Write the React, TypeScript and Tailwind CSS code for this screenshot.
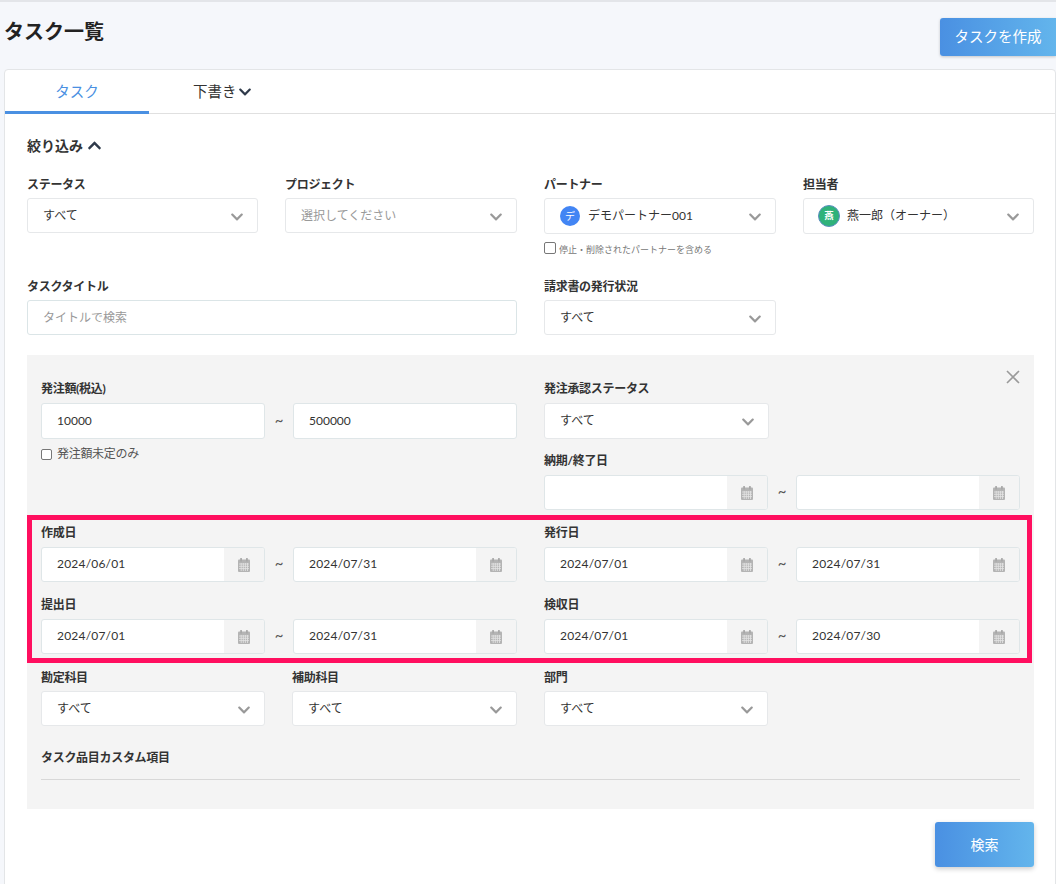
import { ReactNode } from "react";
import { FaChevronDown, FaChevronUp } from "react-icons/fa";

const Label = ({ children, gap = "mb-1" }: { children: ReactNode; gap?: string }) => (
  <div className={`h-5 leading-[22px] text-[12px] tracking-[-0.3px] font-bold text-[#333] ${gap}`}>{children}</div>
);

const Select = ({
  value,
  placeholder,
  icon,
  className = "h-[35px]",
}: {
  value?: string;
  placeholder?: string;
  icon?: ReactNode;
  className?: string;
}) => (
  <div
    className={`flex items-center bg-white border border-[#e6e8ea] rounded-[3px] pl-[15px] pr-[13px] ${className}`}
  >
    {icon}
    <span className={`flex-1 text-[12px] ${placeholder ? "text-[#999]" : "text-[#333]"}`}>
      {value ?? placeholder}
    </span>
    <FaChevronDown className="w-[14px] h-[14px] text-[#999] mt-[2px]" />
  </div>
);

const TextInput = ({ value, placeholder }: { value?: string; placeholder?: string }) => (
  <div className="flex items-center h-[36px] bg-white border border-[#dfe6e8] rounded-[3px] pl-[15px]">
    <span className={`text-[12px] ${placeholder ? "text-[#999]" : "text-[#333]"}`}>{value ?? placeholder}</span>
  </div>
);

const CalendarIcon = () => (
  <svg width="12" height="14" viewBox="0 0 12 14">
    <rect x="0" y="1.5" width="12" height="12.5" rx="1" fill="#b4b4b4" />
    <rect x="2.2" y="0" width="1.8" height="3.5" rx="0.6" fill="#a8a8a8" />
    <rect x="8" y="0" width="1.8" height="3.5" rx="0.6" fill="#a8a8a8" />
    <path
      d="M1 6h10M1 8.3h10M1 10.6h10M3.2 5v8M5.3 5v8M7.4 5v8M9.5 5v8"
      stroke="#e6e6e6"
      strokeWidth="0.8"
      fill="none"
    />
  </svg>
);

const DateInput = ({ value }: { value?: string }) => (
  <div className="flex h-[35px] bg-white border border-[#dfe6e8] rounded-[3px] overflow-hidden">
    <div className="flex-1 flex items-center pl-[15px] pb-[1px] text-[12px] tracking-[0.2px] text-[#333]">{value}</div>
    <div className="w-[40px] flex items-center justify-center bg-[#f4f4f4]">
      <CalendarIcon />
    </div>
  </div>
);

const Range = ({ children }: { children: ReactNode }) => (
  <div className="grid grid-cols-[224px_28px_224px] items-center">{children}</div>
);

const Tilde = () => <div className="text-center text-[15px] leading-5 text-[#555] pb-[3px]">~</div>;

const DateRange = ({ from, to }: { from?: string; to?: string }) => (
  <Range>
    <DateInput value={from} />
    <Tilde />
    <DateInput value={to} />
  </Range>
);

const Avatar = ({ text, className }: { text: string; className: string }) => (
  <span className={`flex items-center justify-center rounded-full text-white ${className}`}>{text}</span>
);

const Check = ({ className = "" }: { className?: string }) => (
  <span className={`block bg-white border border-[#777] rounded-[2px] ${className}`} />
);

export default function App() {
  return (
    <div
      className="h-[884px] overflow-hidden bg-[#f5f7fb] border-t-2 border-[#e3e5e9] pl-1 text-[#333]"
      style={{ fontFamily: '"Lato", "Noto Sans CJK JP", sans-serif' }}
    >
      {/* Header */}
      <div className="flex justify-between h-[67px]">
        <h1 className="text-[20px] font-bold leading-[28px] mt-[15px] text-[#222]">タスク一覧</h1>
        <button className="w-[116px] h-[38px] mt-4 rounded-l-[3px] bg-gradient-to-r from-[#4a90e2] to-[#63b5ec] text-white text-[14.5px] shadow-[0_1px_3px_rgba(0,0,0,0.2)]">
          タスクを作成
        </button>
      </div>

      <div className="bg-white border border-[#e3e5e7] rounded-t-[4px] h-[900px]">
        {/* Tabs */}
        <div className="flex h-[44px] border-b border-[#e0e0e0]">
          <div className="w-[144px] h-[44px] flex items-center justify-center border-b-[3px] border-[#4a90e2] text-[14.5px] text-[#4a90e2] pt-[3px]">
            タスク
          </div>
          <div className="flex items-center pl-[44px] pt-[1px] text-[14.5px] text-[#333]">
            下書き
            <FaChevronDown className="w-[14px] h-[14px] ml-[1px] text-[#2f3a4a]" />
          </div>
        </div>

        <div className="pl-[22px] pr-[21px] pt-[21px]">
          <div className="flex items-center h-5 mb-[19px] text-[14px] font-bold text-[#333]">
            絞り込み
            <FaChevronUp className="w-[15px] h-[15px] ml-[4px] text-[#2f3a4a]" />
          </div>

          {/* Main filters */}
          <div className="grid grid-cols-[231px_232px_232px_231px] gap-x-[27px] h-[102px]">
            <div>
              <Label>ステータス</Label>
              <Select value="すべて" />
            </div>
            <div>
              <Label>プロジェクト</Label>
              <Select placeholder="選択してください" />
            </div>
            <div>
              <Label>パートナー</Label>
              <Select
                className="h-[36px]"
                value="デモパートナー001"
                icon={<Avatar text="デ" className="w-5 h-5 mr-2 bg-[#4285f4] text-[10px]" />}
              />
              <div className="flex items-start mt-2">
                <Check className="w-[12px] h-[12px] mr-[3px]" />
                <span className="text-[9px] leading-[16px] text-[#777]">停止・削除されたパートナーを含める</span>
              </div>
            </div>
            <div>
              <Label>担当者</Label>
              <Select
                className="h-[36px]"
                value="燕一郎（オーナー）"
                icon={
                  <Avatar
                    text="燕"
                    className="w-[22px] h-[22px] -ml-[1px] mr-[7px] bg-[#2fb27a] border border-[#5b8fc0] text-[9px] font-bold"
                  />
                }
              />
            </div>
          </div>

          <div className="grid grid-cols-[490px_232px] gap-x-[27px]">
            <div>
              <Label>タスクタイトル</Label>
              <div className="[&>div]:h-[35px] [&>div]:border-[#dbe5e7]">
                <TextInput placeholder="タイトルで検索" />
              </div>
            </div>
            <div>
              <Label>請求書の発行状況</Label>
              <Select value="すべて" />
            </div>
          </div>

          {/* Detail panel */}
          <div className="relative mt-5 w-[1007px] h-[454px] bg-[#f4f4f4] pl-[14px] pt-[23px]">
            <button className="absolute right-[14px] top-[15px] text-[#9a9a9a]">
              <svg width="14" height="14" viewBox="0 0 14 14" fill="none" stroke="currentColor" strokeWidth="1.6">
                <path d="M1 1l12 12M13 1L1 13" />
              </svg>
            </button>

            {/* Highlight frame */}
            <div className="absolute left-0 top-[160px] w-[1005px] h-[148px] border-[5px] border-[#ff0f5f]" />

            <div className="grid grid-cols-[476px_476px] gap-x-[27px]">
              <div className="h-[144px]">
                <Label gap="mb-[5px]">発注額(税込)</Label>
                <Range>
                  <TextInput value="10000" />
                  <Tilde />
                  <TextInput value="500000" />
                </Range>
                <div className="flex items-center mt-2">
                  <Check className="w-[11px] h-[11px] mr-[5px]" />
                  <span className="text-[12px] tracking-[-0.3px] leading-[14px] text-[#555]">発注額未定のみ</span>
                </div>
              </div>
              <div className="h-[144px]">
                <Label gap="mb-[5px]">発注承認ステータス</Label>
                <div className="w-[225px] mb-[11px]">
                  <Select className="h-[36px]" value="すべて" />
                </div>
                <Label gap="mb-[5px]">納期/終了日</Label>
                <DateRange />
              </div>

              <div className="h-[72px]">
                <Label gap="mb-[5px]">作成日</Label>
                <DateRange from="2024/06/01" to="2024/07/31" />
              </div>
              <div className="h-[72px]">
                <Label gap="mb-[5px]">発行日</Label>
                <DateRange from="2024/07/01" to="2024/07/31" />
              </div>
              <div className="h-[73px]">
                <Label gap="mb-[5px]">提出日</Label>
                <DateRange from="2024/07/01" to="2024/07/31" />
              </div>
              <div className="h-[73px]">
                <Label gap="mb-[5px]">検収日</Label>
                <DateRange from="2024/07/01" to="2024/07/30" />
              </div>
            </div>

            <div className="grid grid-cols-[224px_225px_224px] gap-x-[27px] h-[80px]">
              <div>
                <Label>勘定科目</Label>
                <Select value="すべて" />
              </div>
              <div>
                <Label>補助科目</Label>
                <Select value="すべて" />
              </div>
              <div>
                <Label>部門</Label>
                <Select value="すべて" />
              </div>
            </div>

            <div className="w-[979px] h-[32px] border-b border-[#d8d8d8] box-content">
              <Label>タスク品目カスタム項目</Label>
            </div>
          </div>

          <div className="flex justify-end mt-[13px] w-[1007px]">
            <button className="w-[99px] h-[45px] rounded-[3px] bg-gradient-to-r from-[#4a90e2] to-[#63b5ec] text-white text-[14px] shadow-[0_2px_5px_rgba(0,0,0,0.2)]">
              検索
            </button>
          </div>
        </div>
      </div>
    </div>
  );
}
